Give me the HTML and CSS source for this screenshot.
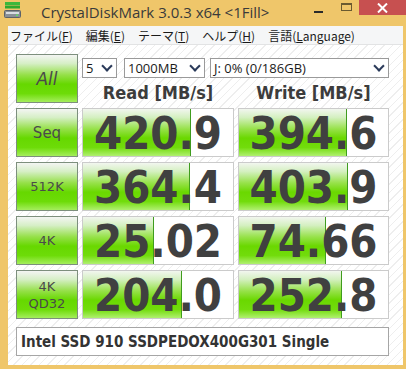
FILE: index.html
```html
<!DOCTYPE html>
<html lang="ja">
<head>
  <meta charset="UTF-8" />
  <title>CrystalDiskMark 3.0.3 x64</title>
  <link rel="stylesheet" href="styles.css">
</head>
<body>
  <div class="window">
    <div class="titlebar">
      <svg class="app-icon" width="17" height="16" viewBox="0 0 17 16">
        <rect x="1" y="0" width="15" height="3" fill="#3cb83c"/>
        <rect x="1" y="3.5" width="15" height="3" fill="#2ea82e"/>
        <rect x="0.5" y="8.5" width="16" height="7" rx="1" fill="#8a9096" stroke="#5c6268"/>
        <rect x="2" y="10" width="13" height="2" fill="#d8dde2"/>
        <rect x="12" y="12.5" width="2" height="1.5" fill="#5fe05f"/>
      </svg>
      <span class="title">CrystalDiskMark 3.0.3 x64 &lt;1Fill&gt;</span>
      <div class="controls">
        <span class="ctl-min"></span>
        <span class="ctl-max"></span>
        <span class="ctl-close">
          <svg width="11" height="10" viewBox="0 0 11 10"><path d="M1 0.5 L10 9.5 M10 0.5 L1 9.5" stroke="#fff" stroke-width="2"/></svg>
        </span>
      </div>
    </div>

    <div class="menubar">
      <span>ファイル(<u>F</u>)</span>
      <span>編集(<u>E</u>)</span>
      <span>テーマ(<u>T</u>)</span>
      <span>ヘルプ(<u>H</u>)</span>
      <span>言語(<u>L</u>anguage)</span>
    </div>

    <div class="content">
      <div class="grid">
        <div class="btn btn-all">All</div>
        <div class="top-right">
          <div class="selects">
            <div class="select sel-count">5<span class="chev"></span></div>
            <div class="select sel-size">1000MB<span class="chev"></span></div>
            <div class="select sel-drive">J: 0% (0/186GB)<span class="chev"></span></div>
          </div>
          <div class="heads">
            <div>Read [MB/s]</div>
            <div>Write [MB/s]</div>
          </div>
        </div>

        <div class="btn btn-seq">Seq</div>
        <div class="value"><div class="fill" style="width:107px"></div><span>420.9</span></div>
        <div class="value"><div class="fill" style="width:107px"></div><span>394.6</span></div>

        <div class="btn">512K</div>
        <div class="value"><div class="fill" style="width:106px"></div><span>364.4</span></div>
        <div class="value"><div class="fill" style="width:108px"></div><span>403.9</span></div>

        <div class="btn">4K</div>
        <div class="value"><div class="fill" style="width:70px"></div><span>25.02</span></div>
        <div class="value"><div class="fill" style="width:86px"></div><span>74.66</span></div>

        <div class="btn btn-two">4K<br>QD32</div>
        <div class="value"><div class="fill" style="width:98px"></div><span>204.0</span></div>
        <div class="value"><div class="fill" style="width:102px"></div><span>252.8</span></div>
      </div>

      <div class="desc">Intel SSD 910 SSDPEDOX400G301 Single</div>
    </div>
  </div>
</body>
</html>
```

FILE: styles.css
```css
body {
  margin: 0;
  padding: 0;
  font-family: "Open Sans", sans-serif;
}
.window {
  width: 406px;
  height: 369px;
  box-sizing: border-box;
  background-color: #efc66a;
  padding: 0 3px 4px 8px;
  display: flex;
  flex-direction: column;
}
.titlebar {
  height: 26px;
  margin-left: -8px;
  margin-right: -3px;
  display: flex;
  align-items: flex-start;
  position: relative;
}
.app-icon {
  margin: 2px 0 0 4px;
}
.title {
  margin-left: 20px;
  margin-top: 2px;
  font-size: 15px;
  color: #3a3a3a;
}
.controls {
  position: absolute;
  top: 0;
  right: 0;
  display: flex;
  align-items: flex-start;
}
.ctl-min {
  width: 9px;
  height: 2px;
  background: #2a2a2a;
  margin: 11px 18px 0 0;
}
.ctl-max {
  width: 9px;
  height: 5px;
  border: 1px solid #6a5a30;
  border-top-width: 2px;
  margin: 3px 7px 0 0;
}
.ctl-close {
  width: 47px;
  height: 15px;
  background: #c75050;
  display: flex;
  align-items: center;
  justify-content: center;
}
.menubar {
  height: 18px;
  background: #f5f6f7;
  border-bottom: 1px solid #e2e3e4;
  display: flex;
  align-items: center;
  font-family: "Noto Sans CJK JP", sans-serif;
  font-size: 12px;
  color: #1a1a1a;
  padding-left: 2px;
}
.menubar span {
  margin-right: 13px;
}
.menubar u {
  text-underline-offset: 1px;
}
.content {
  flex: 1;
  background-color: #ffffff;
  background-image: repeating-linear-gradient(-45deg, #ffffff 0px, #ffffff 5px, #eeeeee 5px, #eeeeee 6px);
  padding: 9px 0 0 8px;
}
.grid {
  display: grid;
  grid-template-columns: 62px 152px 151px;
  grid-template-rows: 49px 49px 49px 49px 49px;
  column-gap: 4px;
  row-gap: 5px;
}
.btn {
  box-sizing: border-box;
  border: 1px solid #7d8f7d;
  background: linear-gradient(to bottom, #f4f5f3 0%, #d6efc6 18%, #96e04a 42%, #66d800 62%, #6ddc08 82%, #a4ee5c 100%);
  display: flex;
  align-items: center;
  justify-content: center;
  text-align: center;
  font-family: "DejaVu Sans", sans-serif;
  font-size: 13px;
  color: #4a4a4a;
}
.btn-all {
  font-size: 17px;
  font-style: italic;
}
.btn-seq {
  font-size: 15px;
}
.btn-two {
  line-height: 17px;
}
.top-right {
  grid-column: 2 / 4;
  display: flex;
  flex-direction: column;
}
.selects {
  display: flex;
  margin-top: 4px;
}
.select {
  box-sizing: border-box;
  height: 20px;
  background: #fff;
  border: 1px solid #9a9a9a;
  font-size: 13px;
  color: #1a1a1a;
  display: flex;
  align-items: center;
  justify-content: space-between;
  padding: 0 5px 0 3px;
}
.sel-count {
  width: 35px;
}
.sel-size {
  width: 81px;
  margin-left: 7px;
}
.sel-drive {
  width: 179px;
  margin-left: 5px;
}
.chev {
  width: 6px;
  height: 6px;
  border-right: 2px solid #2a3a5a;
  border-bottom: 2px solid #2a3a5a;
  transform: rotate(45deg);
  margin-top: -5px;
}
.heads {
  display: grid;
  grid-template-columns: 152px 151px;
  column-gap: 4px;
  margin-top: 4px;
  font-family: "DejaVu Sans Condensed", "DejaVu Sans", sans-serif;
  font-stretch: condensed;
  font-weight: bold;
  font-size: 18px;
  color: #3c3c3c;
  text-align: center;
}
.value {
  position: relative;
  box-sizing: border-box;
  border: 1px solid #cbcbcb;
  background: #fff;
  display: flex;
  align-items: center;
  justify-content: center;
}
.fill {
  position: absolute;
  left: 0;
  top: 0;
  bottom: 0;
  border-right: 1px solid #3f9c1e;
  background: linear-gradient(to bottom, #f2f6ef 0%, #d4f0c0 18%, #98e24c 42%, #6ad800 62%, #72dc0c 82%, #b0f070 100%);
}
.value span {
  position: relative;
  font-family: "DejaVu Sans Condensed", "DejaVu Sans", sans-serif;
  font-stretch: condensed;
  font-weight: bold;
  font-size: 45px;
  color: #404040;
  line-height: 1;
  margin-top: 2px;
}
.desc {
  box-sizing: border-box;
  width: 373px;
  height: 29px;
  margin-top: 8px;
  background: #fff;
  border: 1px solid #a6a6a6;
  padding-left: 4px;
  display: flex;
  align-items: center;
  font-family: "DejaVu Sans Condensed", "DejaVu Sans", sans-serif;
  font-stretch: condensed;
  font-weight: bold;
  font-size: 15px;
  color: #333;
}
```
